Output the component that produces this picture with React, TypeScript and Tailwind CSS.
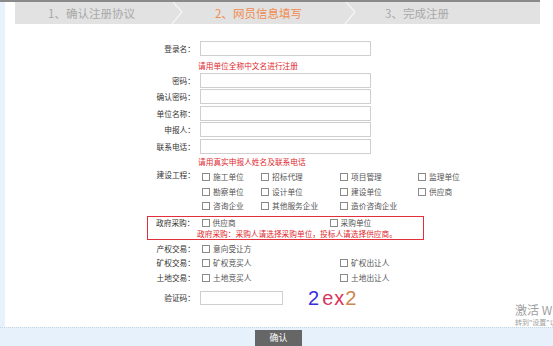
import React from 'react'

const font = { fontFamily: '"Noto Sans CJK SC", "Noto Sans", sans-serif' }

function Box() {
  return <span className="inline-block w-[8px] h-[8px] border border-[#8a8a8a] bg-white shrink-0" />
}

function Check({ text }: { text: string }) {
  return (
    <div className="flex items-center gap-[3px] pl-[2px] whitespace-nowrap">
      <Box />
      <span className="text-[#555]">{text}</span>
    </div>
  )
}

function Label({ text, w = 'w-[56px]' }: { text: string; w?: string }) {
  return <div className={`${w} text-right text-[#333] shrink-0 pr-[1px]`}>{text}：</div>
}

function InputRow({ label, cls }: { label: string; cls: string }) {
  return (
    <div className={`flex items-center gap-[4px] h-[15px] ${cls}`}>
      <Label text={label} />
      <div className="w-[171px] h-[15px] border border-[#cfcfcf] bg-white" />
    </div>
  )
}

function Chevron() {
  return (
    <svg width="14" height="22" viewBox="0 0 14 22" className="shrink-0">
      <polyline points="3,0 12,10 2,22" fill="none" stroke="#f6f6f6" strokeWidth="1.2" />
    </svg>
  )
}

export default function App() {
  return (
    <div className="w-[553px] h-[346px] overflow-hidden relative bg-white text-[7.7px] leading-[10px]" style={font}>
      <div className="h-[2px] w-[540px] bg-[#8a8a8a]" />

      <div className="flex h-[325px]">
        <div className="w-[5px] bg-[#e8f2fc]" />
        <div className="flex-1 bg-white">
          {/* steps */}
          <div className="ml-[10px] w-[525px] h-[22px] bg-[#e2e2e2] flex items-center text-[11.5px] leading-[22px]">
            <div className="w-[155px] pl-[33px] text-[#a8a8a8]">1、确认注册协议</div>
            <Chevron />
            <div className="w-[159px] pl-[31px] text-[#f08a4e]">2、网员信息填写</div>
            <Chevron />
            <div className="flex-1 pl-[28px] text-[#a8a8a8]">3、完成注册</div>
          </div>

          {/* form */}
          <div className="ml-[135px]">
            <InputRow label="登录名" cls="mt-[17px]" />
            <div className="h-[17px] pl-[58px] pt-[5px] text-[#e0282e]">请用单位全称中文名进行注册</div>
            <InputRow label="密码" cls="" />
            <InputRow label="确认密码" cls="mt-[1px]" />
            <InputRow label="单位名称" cls="mt-[2px]" />
            <InputRow label="申报人" cls="mt-[1px]" />
            <InputRow label="联系电话" cls="mt-[2px]" />
            <div className="h-[16px] pl-[58px] flex items-center text-[#e0282e]">请用真实申报人姓名及联系电话</div>

            <div className="flex gap-[4px]">
              <Label text="建设工程" />
              <div className="grid grid-cols-[59px_79px_78px_auto] auto-rows-[14.5px] items-center">
                <Check text="施工单位" />
                <Check text="招标代理" />
                <Check text="项目管理" />
                <Check text="监理单位" />
                <Check text="勘察单位" />
                <Check text="设计单位" />
                <Check text="建设单位" />
                <Check text="供应商" />
                <Check text="咨询企业" />
                <Check text="其他服务企业" />
                <Check text="造价咨询企业" />
              </div>
            </div>

            <div className="ml-[7px] mt-[2px] w-[277px] h-[24px] border-[1.5px] border-[#e0303c] pt-[1px]">
              <div className="flex items-center gap-[4px] h-[10px]">
                <Label text="政府采购" w="w-[47.5px]" />
                <div className="grid grid-cols-[128px_auto] items-center">
                  <Check text="供应商" />
                  <Check text="采购单位" />
                </div>
              </div>
              <div className="pl-[49px] mt-[1px] text-[#e0282e] whitespace-nowrap">政府采购：采购人请选择采购单位，投标人请选择供应商。</div>
            </div>

            <div className="flex items-center gap-[4px] h-[14px] mt-[2px]">
              <Label text="产权交易" />
              <Check text="意向受让方" />
            </div>
            <div className="flex items-center gap-[4px] h-[14px]">
              <Label text="矿权交易" />
              <div className="grid grid-cols-[138px_auto] items-center">
                <Check text="矿权竞买人" />
                <Check text="矿权出让人" />
              </div>
            </div>
            <div className="flex items-center gap-[4px] h-[14px] mt-[1px]">
              <Label text="土地交易" />
              <div className="grid grid-cols-[138px_auto] items-center">
                <Check text="土地竞买人" />
                <Check text="土地出让人" />
              </div>
            </div>

            <div className="flex items-center gap-[4px] h-[14px] mt-[6px]">
              <Label text="验证码" />
              <div className="w-[83px] h-[14px] border border-[#cfcfcf] bg-white" />
              <div className="ml-[21px] flex items-center text-[20px] leading-[20px] tracking-[1px]" style={{ fontFamily: '"Liberation Sans", Arial, sans-serif' }}>
                <span className="text-[#3a2ee0]">2</span>
                <span className="text-[#d4385f] ml-[2px]">e</span>
                <span className="text-[#dd2f57]">x</span>
                <span className="text-[#cc8650]">2</span>
              </div>
            </div>
          </div>
        </div>
      </div>

      {/* bottom bar */}
      <div className="h-[19px] bg-[#e6f1fb] border-t border-dotted border-[#c7d6e4] flex justify-center">
        <button className="w-[47px] h-[24px] mt-[2px] ml-[4px] bg-[#666] text-white text-[9px] leading-[10px] flex justify-center items-start">
          <span className="mt-[3px]">确认</span>
        </button>
      </div>

      {/* windows watermark */}
      <div className="absolute left-[515px] top-[303px] whitespace-nowrap text-[#a0a0a0]">
        <div className="text-[12px] leading-[13px]">激活 Windows</div>
        <div className="text-[7px] leading-[8px] mt-[2px]">转到"设置"以激活 Windows。</div>
      </div>
    </div>
  )
}
